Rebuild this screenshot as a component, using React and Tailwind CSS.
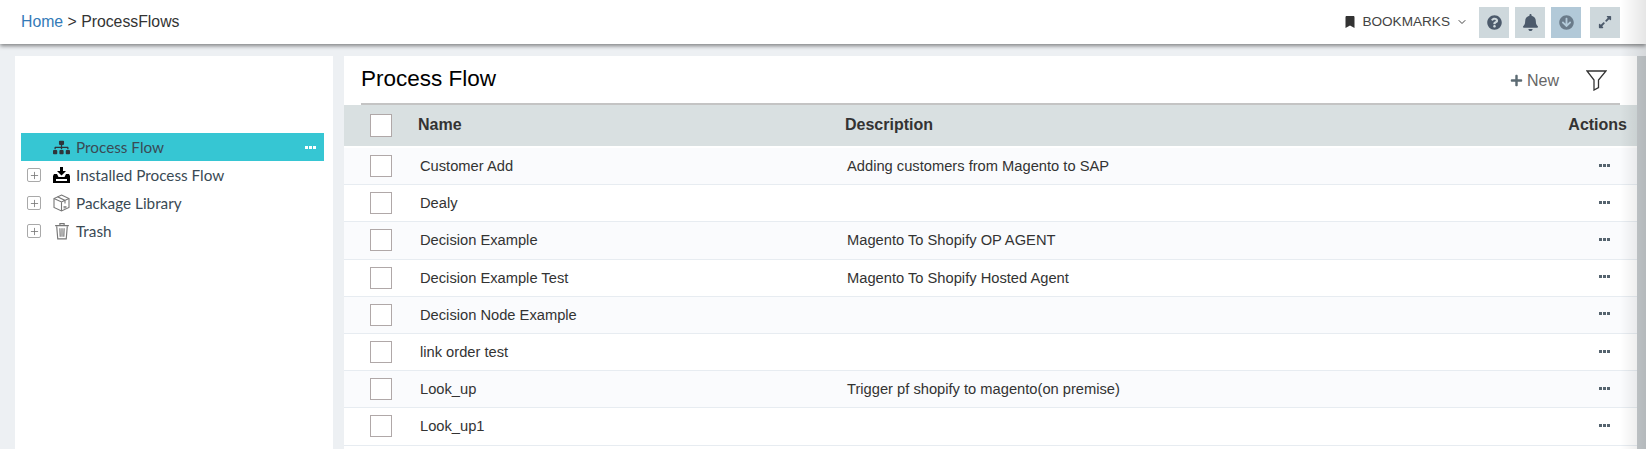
import { ChevronDown, Plus } from "lucide-react";
import { FaBookmark, FaQuestionCircle, FaBell, FaArrowCircleDown, FaExpandAlt, FaPlus, FaSitemap } from "react-icons/fa";

const rows = [
    { name: "Customer Add", description: "Adding customers from Magento to SAP" },
    { name: "Dealy", description: "" },
    { name: "Decision Example", description: "Magento To Shopify OP AGENT" },
    { name: "Decision Example Test", description: "Magento To Shopify Hosted Agent" },
    { name: "Decision Node Example", description: "" },
    { name: "link order test", description: "" },
    { name: "Look_up", description: "Trigger pf shopify to magento(on premise)" },
    { name: "Look_up1", description: "" },
];

function Dots({ className }) {
    return (
        <span className={`flex gap-px ${className}`}>
            <span className="w-[3px] h-[3px] bg-current"></span>
            <span className="w-[3px] h-[3px] bg-current"></span>
            <span className="w-[3px] h-[3px] bg-current"></span>
        </span>
    );
}

function TopButton({ color, children }) {
    return (
        <button className={`w-[30px] h-[31px] flex items-center justify-center ${color}`}>
            {children}
        </button>
    );
}

function InstalledIcon() {
    return (
        <svg width="17" height="16" viewBox="0 0 17 16" fill="#000">
            <path d="M7 0h3v4h3l-4.500 4.500L4 4h3z" />
            <path d="M1 7h3l1.500 3h6L13 7h3l1 2v7H0V9zM3 12v2h11v-2z" fillRule="evenodd" />
        </svg>
    );
}

function PackageIcon() {
    return (
        <svg width="17" height="18" viewBox="0 0 17 18" fill="none" stroke="#777" strokeWidth="1.1">
            <path d="M8.500 1L16 4.500v9L8.500 17 1 13.500v-9z" />
            <path d="M1 4.500L8.500 8 16 4.500M8.500 8v9M4.500 2.800l7.500 3.600v3" />
            <path d="M10.500 12h3v2.500h-3z" fill="#999" stroke="none" />
        </svg>
    );
}

function TrashIcon() {
    return (
        <svg width="16" height="18" viewBox="0 0 15 17" fill="none" stroke="#777" strokeWidth="1.1">
            <path d="M1 3.500h13M5.500 3V1.500h4V3" />
            <path d="M2.500 4l1 12h8l1-12" />
            <path d="M5.500 6l.3 8M7.500 6v8M9.500 6l-.3 8" />
        </svg>
    );
}

function FunnelIcon() {
    return (
        <svg width="21" height="21" viewBox="0 0 21 21" fill="none" stroke="#333" strokeWidth="1.3">
            <path d="M1 1h19l-7.500 9v7.500L8 20v-10z" strokeLinejoin="miter" />
        </svg>
    );
}

function TreeRow({ icon, label, active, expandable = true }) {
    return (
        <div className={`h-[28px] flex items-center ${active ? "bg-[#36c6d3]" : ""}`}>
            <span className="w-[32px] flex shrink-0 pl-[6px]">
                {expandable && (
                    <span className="w-[14px] h-[14px] border border-[#a9a9a9] rounded-[2px] flex items-center justify-center">
                        <Plus size={11} strokeWidth={1.8} className="text-[#777]" />
                    </span>
                )}
            </span>
            <span className="w-[17px] flex justify-center shrink-0">{icon}</span>
            <span className="ml-[6px] font-['Lato',sans-serif] text-[15.3px] text-[#3a4a55]">{label}</span>
            {active && <Dots className="ml-auto mr-[8px] text-white" />}
        </div>
    );
}

export default function App() {
    return (
        <div className="w-[1646px] h-[449px] overflow-hidden bg-[#edf0f3] font-['Liberation_Sans',sans-serif] flex flex-col relative">
            {/* Top bar */}
            <header className="h-[44px] shrink-0 bg-white shadow-[0_2px_4px_rgba(0,0,0,0.45)] flex items-center pl-[21px] pr-[26px] relative z-10">
                <div className="text-[15.8px] text-[#333]">
                    <span className="text-[#337ab7]">Home</span> &gt; ProcessFlows
                </div>
                <div className="ml-auto flex items-center">
                    <FaBookmark size={12} className="text-[#333] mr-[6px]" />
                    <span className="text-[13.6px] text-[#444] mr-[6px]">BOOKMARKS</span>
                    <ChevronDown size={12} className="text-[#444] mr-[11px]" />
                    <div className="flex items-center gap-[6px]">
                        <TopButton color="bg-[#ced8dc]">
                            <FaQuestionCircle size={15} className="text-[#4c5a6b]" />
                        </TopButton>
                        <TopButton color="bg-[#ced8dc]">
                            <FaBell size={17} className="text-[#4c5a6b]" />
                        </TopButton>
                        <TopButton color="bg-[#b2c9d8]">
                            <FaArrowCircleDown size={15} className="text-[#6a7b8a]" />
                        </TopButton>
                        <div className="ml-[3px]">
                            <TopButton color="bg-[#ced8dc]">
                                <FaExpandAlt size={14} className="text-[#4c5a6b]" />
                            </TopButton>
                        </div>
                    </div>
                </div>
            </header>

            <div className="flex-1 flex min-h-0 pt-[12px] pl-[15px]">
                {/* Sidebar */}
                <aside className="w-[318px] bg-white shrink-0 pt-[77px] pl-[6px] pr-[9px]">
                    <TreeRow
                        active
                        expandable={false}
                        label="Process Flow"
                        icon={<FaSitemap size={17} className="text-[#2f353b]" />}
                    />
                    <TreeRow label="Installed Process Flow" icon={<InstalledIcon />} />
                    <TreeRow label="Package Library" icon={<PackageIcon />} />
                    <TreeRow label="Trash" icon={<TrashIcon />} />
                </aside>

                {/* Main panel */}
                <main className="ml-[11px] flex-1 bg-white min-w-0">
                    <div className="h-[49px] ml-[17px] mr-[17px] border-b-2 border-[#c4c4c4] flex items-center">
                        <h1 className="text-[22.5px] text-black mb-[1px]">Process Flow</h1>
                        <div className="ml-auto flex items-center mt-[2px]">
                            <FaPlus size={13} className="text-[#5c6b73]" />
                            <span className="ml-[4px] text-[16px] text-[#666] mr-[27px]">New</span>
                            <FunnelIcon />
                            <span className="w-[13px]"></span>
                        </div>
                    </div>
                    <div className="h-[41px] pb-[2px] bg-[#d9e0e1] flex items-center font-bold text-[#333] text-[16px] mb-[2px]">
                        <span className="ml-[26px] mt-[2px] w-[22px] h-[23px] bg-white border border-[#b0a8a8] shrink-0"></span>
                        <span className="ml-[26px] w-[427px]">Name</span>
                        <span>Description</span>
                        <span className="ml-auto mr-[10px]">Actions</span>
                    </div>
                    {rows.map((row, i) => (
                        <div
                            key={row.name}
                            className={`h-[37.2px] flex items-center border-b border-[#e7ecf1] text-[14.7px] text-[#333] ${i % 2 === 0 ? "bg-[#fafbfd]" : "bg-white"}`}
                        >
                            <span className="ml-[26px] w-[22px] h-[22px] bg-white border border-[#b0a8a8] shrink-0"></span>
                            <span className="ml-[28px] w-[427px]">{row.name}</span>
                            <span>{row.description}</span>
                            <Dots className="ml-auto mr-[27px] mb-[2px] text-[#55636e]" />
                        </div>
                    ))}
                </main>

                {/* Right edge */}
                <div className="w-[9px] shrink-0 bg-[#c8cdd0]"></div>
            </div>

            {/* Fade lying over the right edge of the page */}
            <div className="absolute top-0 right-0 bottom-0 w-[26px] z-20 bg-gradient-to-r from-transparent to-black/10 pointer-events-none"></div>
        </div>
    );
}
